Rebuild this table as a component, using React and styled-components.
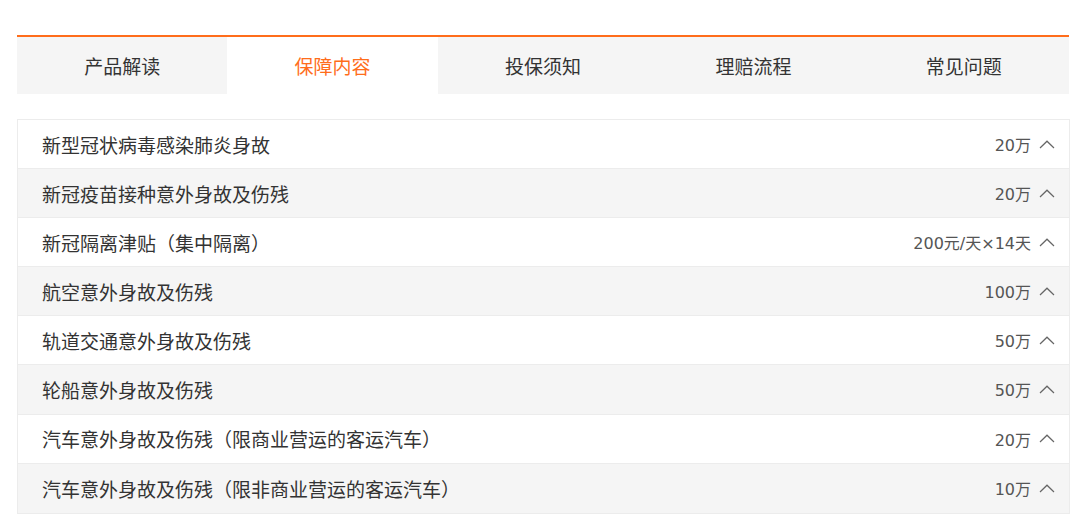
import React from "react";
import styled, { createGlobalStyle } from "styled-components";

const GlobalStyle = createGlobalStyle`
  html, body { margin: 0; padding: 0; background: #ffffff; }
  body { font-family: "Noto Sans CJK SC", "Noto Sans", sans-serif; }
`;

const Page = styled.div`
  width: 1080px;
  height: 525px;
  padding: 35px 0 0 17px;
  box-sizing: border-box;
  overflow: hidden;
`;

const Tabs = styled.nav`
  width: 1052px;
  display: grid;
  grid-template-columns: repeat(5, 1fr);
  border-top: 2px solid #ff6d1b;
  background: #f5f5f5;
`;

const Tab = styled.div`
  height: 57px;
  display: flex;
  align-items: center;
  justify-content: center;
  font-family: "Noto Sans CJK SC", sans-serif;
  font-size: 19px;
  color: ${(p) => (p.$active ? "#ff6d1b" : "#333333")};
  background: ${(p) => (p.$active ? "#ffffff" : "transparent")};
`;

const List = styled.ul`
  list-style: none;
  margin: 25px 0 0;
  padding: 0;
  width: 1053px;
  border: 1px solid #ececec;
  border-bottom: none;
  box-sizing: border-box;
`;

const Row = styled.li`
  height: 48px;
  display: flex;
  align-items: center;
  justify-content: space-between;
  padding: 0 14px 0 24px;
  border-bottom: 1px solid #ececec;
  background: ${(p) => (p.$alt ? "#f5f5f5" : "#ffffff")};
  &:nth-child(n + 6) { height: 48.5px; }
`;

const Label = styled.span`
  font-family: "Noto Sans CJK SC", sans-serif;
  font-size: 19px;
  color: #333333;
`;

const Right = styled.span`
  display: flex;
  align-items: center;
  gap: 8px;
`;

const Value = styled.span`
  font-family: "DejaVu Sans", "Noto Sans CJK SC", sans-serif;
  font-size: 16px;
  color: #555555;
`;

const Chevron = () => (
  <svg width="16" height="9" viewBox="0 0 16 9" fill="none">
    <polyline points="1,8 8,1.2 15,8" stroke="#666" strokeWidth="1.2" />
  </svg>
);

const tabs = ["产品解读", "保障内容", "投保须知", "理赔流程", "常见问题"];

const rows = [
  ["新型冠状病毒感染肺炎身故", "20万"],
  ["新冠疫苗接种意外身故及伤残", "20万"],
  ["新冠隔离津贴（集中隔离）", "200元/天×14天"],
  ["航空意外身故及伤残", "100万"],
  ["轨道交通意外身故及伤残", "50万"],
  ["轮船意外身故及伤残", "50万"],
  ["汽车意外身故及伤残（限商业营运的客运汽车）", "20万"],
  ["汽车意外身故及伤残（限非商业营运的客运汽车）", "10万"],
];

export default function App() {
  return (
    <>
      <GlobalStyle />
      <Page>
        <Tabs>
          {tabs.map((t, i) => (
            <Tab key={t} $active={i === 1}>
              {t}
            </Tab>
          ))}
        </Tabs>
        <List>
          {rows.map(([label, value], i) => (
            <Row key={label} $alt={i % 2 === 1}>
              <Label>{label}</Label>
              <Right>
                <Value>{value}</Value>
                <Chevron />
              </Right>
            </Row>
          ))}
        </List>
      </Page>
    </>
  );
}
